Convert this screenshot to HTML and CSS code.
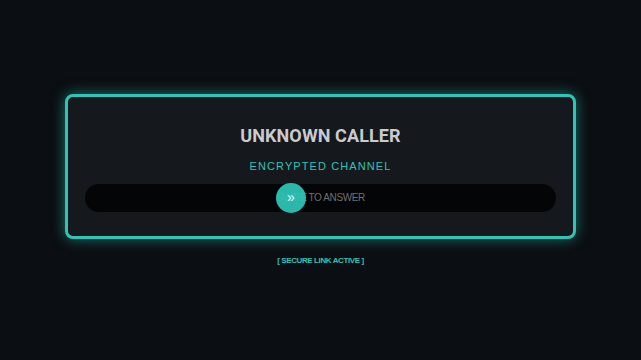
FILE: index.html
```html
<!DOCTYPE html>
<html lang="en">
<head>
    <meta charset="UTF-8" />
    <meta name="viewport" content="width=device-width, initial-scale=1.0" />
    <title>Incoming Call</title>
    <link rel="stylesheet" href="styles.css">
</head>
<body>
    <div class="call-card">
        <div class="caller-name">UNKNOWN CALLER</div>
        <div class="caller-status">ENCRYPTED CHANNEL</div>

        <div class="swipe-track">
            <div class="swipe-label">SWIPE TO ANSWER</div>
            <div class="swipe-thumb">&raquo;</div>
        </div>
    </div>

    <div class="link-status">[ SECURE LINK ACTIVE ]</div>
</body>
</html>
```

FILE: styles.css
```css
:root {
    --bg: #0b0e12;
    --card: #15181c;
    --teal: #2ec4b6;
    --text: #c9cbce;
    --muted: #6e6f71;
}
body {
    background-color: var(--bg);
    color: var(--text);
    font-family: "Liberation Sans", Arial, sans-serif;
    display: flex;
    flex-direction: column;
    align-items: center;
    justify-content: center;
    min-height: 100vh;
    margin: 0;
    box-sizing: border-box;
}
.call-card {
    width: 511px;
    box-sizing: border-box;
    background-color: var(--card);
    border: 3px solid var(--teal);
    border-radius: 8px;
    padding: 27px 17px 24px;
    box-shadow: 0 0 14px rgba(46, 196, 182, 0.55);
    display: flex;
    flex-direction: column;
    align-items: center;
}
.caller-name {
    font-family: Roboto, "DejaVu Sans", sans-serif;
    font-weight: 700;
    font-size: 18px;
    line-height: 24px;
    letter-spacing: 0.1px;
    color: var(--text);
}
.caller-status {
    margin-top: 11px;
    font-size: 11px;
    line-height: 14px;
    letter-spacing: 1.1px;
    color: var(--teal);
}
.swipe-track {
    position: relative;
    margin-top: 11px;
    width: 100%;
    height: 28px;
    border-radius: 14px;
    background-color: #040506;
    display: flex;
    align-items: center;
    justify-content: center;
}
.swipe-label {
    font-size: 10px;
    line-height: 12px;
    letter-spacing: -0.4px;
    color: var(--muted);
}
.swipe-thumb {
    position: absolute; /* liegt über dem Text */
    left: 191px;
    top: -1px;
    width: 30px;
    height: 30px;
    border-radius: 50%;
    background-color: rgba(46, 196, 182, 0.94);
    color: #dffaf6;
    font-size: 14px;
    line-height: 29px;
    text-align: center;
}
.link-status {
    margin-top: 17px;
    font-size: 8px;
    font-weight: 700;
    line-height: 10px;
    letter-spacing: -0.4px;
    color: var(--teal);
}
```
